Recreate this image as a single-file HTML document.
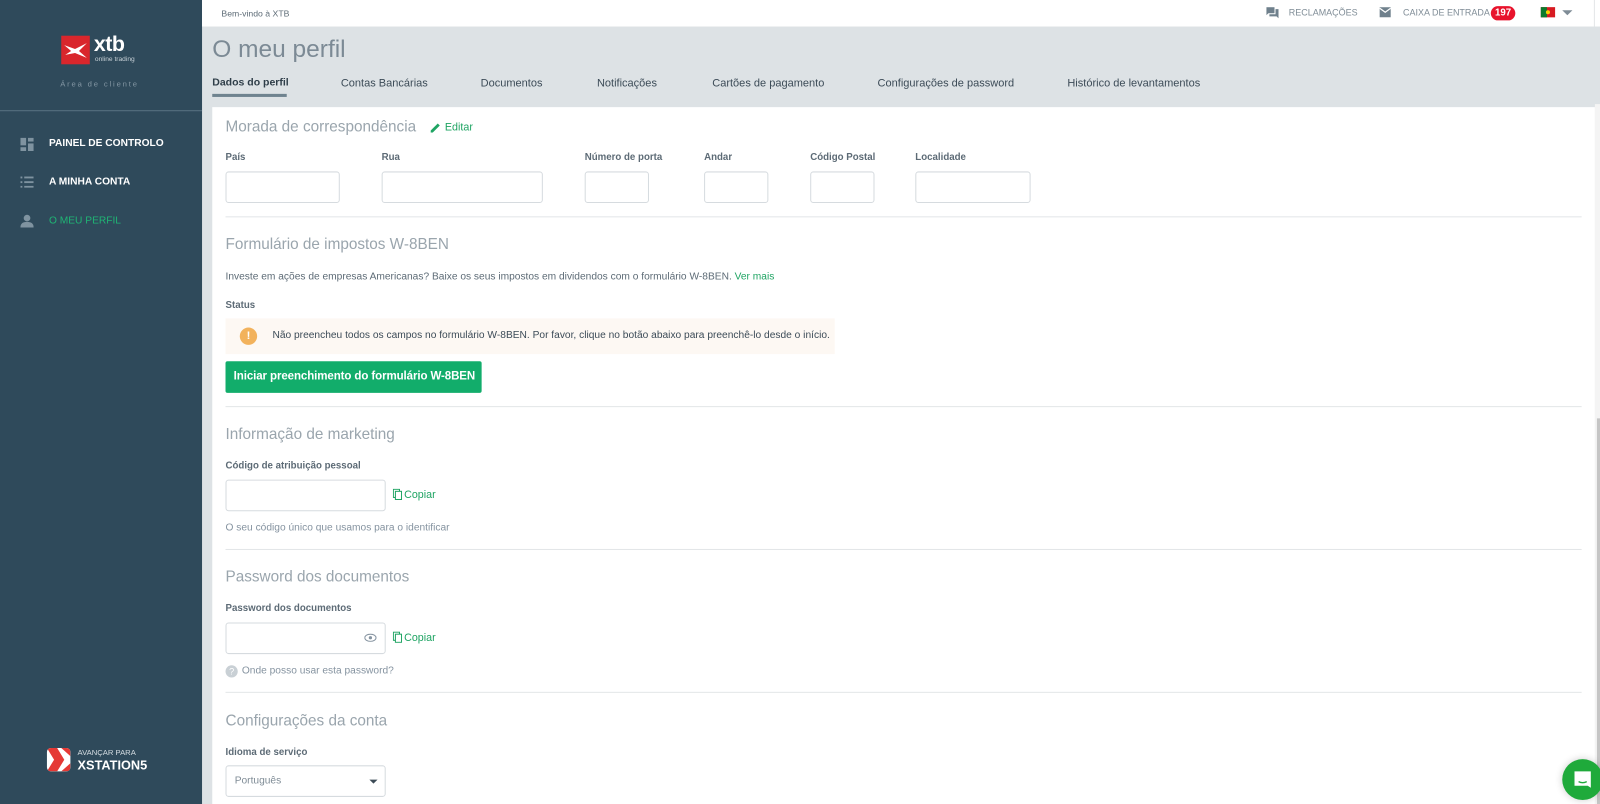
<!DOCTYPE html>
<html><head><meta charset="utf-8"><style>
*{margin:0;padding:0;box-sizing:border-box}
body{width:1600px;height:804px;overflow:hidden;background:#dde2e5;font-family:"Liberation Sans",Arial,sans-serif;color:#3c4b57}
#w{position:absolute;left:0;top:0;width:1568px;height:788px;transform:scale(1.020408);transform-origin:0 0}
.a{position:absolute;white-space:nowrap}
#side{position:absolute;left:0;top:0;width:198px;height:788px;background:#2f4a5b}
#top{position:absolute;left:198px;top:0;width:1370px;height:26px;background:#fff}
#card{position:absolute;left:208px;top:105px;width:1355px;height:683px;background:#fff}
.nav{font-size:10px;font-weight:bold;color:#fff}
.h{font-size:15px;color:#9aa5ad}
.l{font-size:9.5px;font-weight:bold;color:#5d6b76}
.in{position:absolute;border:1px solid #d6dbdf;border-radius:3px;background:#fff;height:31px}
.hr{position:absolute;left:221px;width:1329px;height:1px;background:#e3e6e8}
.t{font-size:10px;color:#5d6b76}
.g{color:#1fa463}
.tab{font-size:10.8px;color:#3c4b57;top:76px}
</style></head><body><div id="w">
<div id="side"></div>
<div class="a" style="left:60px;top:35px;width:28px;height:28px;background:#d9262c"></div>
<svg class="a" style="left:62px;top:41px" width="25" height="17" viewBox="0 0 26 17"><path d="M1 3 L12 7 L24 1 L16 9 L24 16 L12 11 L2 13 L8 9 Z" fill="#fff"/></svg>
<div class="a" style="left:92px;top:32px;font-size:21px;font-weight:bold;color:#fff;letter-spacing:-0.5px">xtb</div>
<div class="a" style="left:93px;top:55px;font-size:6.5px;color:#c7d0d6">online trading</div>
<div class="a" style="left:59px;top:78px;font-size:7.5px;color:#8497a4;letter-spacing:1.8px">Área de cliente</div>
<div class="a" style="left:0;top:108px;width:198px;height:1px;background:#587283"></div>
<svg class="a" style="left:20px;top:135px" width="13" height="13" viewBox="0 0 14 14"><rect x="0" y="0" width="6" height="8" fill="#7f93a0"/><rect x="8" y="0" width="6" height="4" fill="#7f93a0"/><rect x="8" y="6" width="6" height="8" fill="#7f93a0"/><rect x="0" y="10" width="6" height="4" fill="#7f93a0"/></svg>
<div class="a nav" style="left:48px;top:135px">PAINEL DE CONTROLO</div>
<svg class="a" style="left:20px;top:173px" width="13" height="11" viewBox="0 0 14 12"><g fill="#7f93a0"><rect x="0" y="0" width="2" height="2"/><rect x="4" y="0" width="10" height="2"/><rect x="0" y="5" width="2" height="2"/><rect x="4" y="5" width="10" height="2"/><rect x="0" y="10" width="2" height="2"/><rect x="4" y="10" width="10" height="2"/></g></svg>
<div class="a nav" style="left:48px;top:173px">A MINHA CONTA</div>
<svg class="a" style="left:20px;top:210px" width="13" height="13" viewBox="0 0 14 14"><circle cx="7" cy="4" r="3.5" fill="#7f93a0"/><path d="M0 14 Q0 8 7 8 Q14 8 14 14Z" fill="#7f93a0"/></svg>
<div class="a nav" style="left:48px;top:211px;color:#1fb574;font-weight:normal">O MEU PERFIL</div>
<div class="a" style="left:46px;top:733px;width:23px;height:23px;background:#fff;border-radius:4px;overflow:hidden"><svg width="23" height="23"><path d="M0 0 L10 0 L17 11.5 L10 23 L0 23 L7 11.5Z" fill="#e53935"/><path d="M14 0 L23 0 L23 8Z M23 15 L23 23 L14 23Z" fill="#e53935"/></svg></div>
<div class="a" style="left:76px;top:733px;font-size:7.5px;color:#d5dde2">AVANÇAR PARA</div>
<div class="a" style="left:76px;top:743px;font-size:12.5px;font-weight:bold;color:#fff">XSTATION5</div>

<div id="top"></div>
<div class="a" style="left:217px;top:8px;font-size:8.5px;color:#5d6b76">Bem-vindo à XTB</div>
<svg class="a" style="left:1241px;top:7px" width="12" height="11"><path d="M0 0h8v6H2l-2 2z" fill="#6f808c"/><path d="M9 2h3v9l-2-2H3V7h6z" fill="#6f808c"/></svg>
<div class="a" style="left:1263px;top:7px;font-size:8.8px;color:#7f8c96">RECLAMAÇÕES</div>
<svg class="a" style="left:1352px;top:7px" width="11" height="10"><rect width="11" height="10" fill="#6f808c"/><path d="M0 1 L5.5 5 L11 1" stroke="#fff" stroke-width="1.2" fill="none"/></svg>
<div class="a" style="left:1375px;top:7px;font-size:8.8px;color:#7f8c96">CAIXA DE ENTRADA</div>
<div class="a" style="left:1461px;top:6px;width:24px;height:14px;border-radius:7px;background:#e8132c;color:#fff;font-size:9.5px;font-weight:bold;text-align:center;line-height:14px">197</div>
<div class="a" style="left:1510px;top:7px;width:14px;height:10px;background:#d71a21"><div style="width:6px;height:10px;background:#0b7a2c"></div></div>
<div class="a" style="left:1515px;top:10px;width:4px;height:4px;border-radius:50%;background:#f5d300"></div>
<div class="a" style="left:1531px;top:10px;width:0;height:0;border-left:5px solid transparent;border-right:5px solid transparent;border-top:5px solid #7f8c96"></div>
<div class="a" style="left:1562px;top:0;width:1px;height:26px;background:#e3e6e8"></div>

<div class="a" style="left:208px;top:35px;font-size:24px;color:#7c8a95">O meu perfil</div>
<div class="a" style="left:208px;top:76px;font-size:10.3px;font-weight:bold;color:#2f3e49">Dados do perfil</div>
<div class="a" style="left:208px;top:92px;width:73px;height:3px;background:#6f838f"></div>
<div class="a tab" style="left:334px">Contas Bancárias</div>
<div class="a tab" style="left:471px">Documentos</div>
<div class="a tab" style="left:585px">Notificações</div>
<div class="a tab" style="left:698px">Cartões de pagamento</div>
<div class="a tab" style="left:860px">Configurações de password</div>
<div class="a tab" style="left:1046px">Histórico de levantamentos</div>

<div id="card"></div>
<div class="a" style="left:1563px;top:102px;width:5px;height:686px;background:#f4f4f4"></div>
<div class="a" style="left:1565px;top:410px;width:3px;height:378px;background:#c5c5c5"></div>

<div class="a h" style="left:221px;top:116px">Morada de correspondência</div>
<svg class="a" style="left:422px;top:120px" width="10" height="10"><path d="M0 10 L0 8 L7 1 L9 3 L2 10Z" fill="#1fa463"/></svg>
<div class="a g" style="left:436px;top:119px;font-size:10.5px">Editar</div>
<div class="a l" style="left:221px;top:149px">País</div>
<div class="a l" style="left:374px;top:149px">Rua</div>
<div class="a l" style="left:573px;top:149px">Número de porta</div>
<div class="a l" style="left:690px;top:149px">Andar</div>
<div class="a l" style="left:794px;top:149px">Código Postal</div>
<div class="a l" style="left:897px;top:149px">Localidade</div>
<div class="in" style="left:221px;top:168px;width:112px"></div>
<div class="in" style="left:374px;top:168px;width:158px"></div>
<div class="in" style="left:573px;top:168px;width:63px"></div>
<div class="in" style="left:690px;top:168px;width:63px"></div>
<div class="in" style="left:794px;top:168px;width:63px"></div>
<div class="in" style="left:897px;top:168px;width:113px"></div>
<div class="hr" style="top:212px"></div>

<div class="a h" style="left:221px;top:231px">Formulário de impostos W-8BEN</div>
<div class="a t" style="left:221px;top:266px">Investe em ações de empresas Americanas? Baixe os seus impostos em dividendos com o formulário W-8BEN. <span class="g">Ver mais</span></div>
<div class="a l" style="left:221px;top:294px">Status</div>
<div class="a" style="left:221px;top:312px;width:597px;height:35px;background:#fdf8f3"></div>
<div class="a" style="left:235px;top:321px;width:17px;height:17px;border-radius:50%;background:#f2b25c;color:#fff;font-size:11px;font-weight:bold;text-align:center;line-height:17px">!</div>
<div class="a t" style="left:267px;top:323px;color:#3c4b57">Não preencheu todos os campos no formulário W-8BEN. Por favor, clique no botão abaixo para preenchê-lo desde o início.</div>
<div class="a" style="left:221px;top:354px;width:251px;height:31px;background:#12ad6b;border-radius:2px;color:#fff;font-size:11.3px;letter-spacing:-0.1px;font-weight:bold;line-height:31px;padding-left:8px">Iniciar preenchimento do formulário W-8BEN</div>
<div class="hr" style="top:398px"></div>

<div class="a h" style="left:221px;top:417px">Informação de marketing</div>
<div class="a l" style="left:221px;top:451px">Código de atribuição pessoal</div>
<div class="in" style="left:221px;top:470px;width:157px"></div>
<svg class="a" style="left:385px;top:479px" width="9" height="11"><rect x="0.5" y="0.5" width="6" height="8" fill="none" stroke="#1fa463"/><rect x="2.5" y="2.5" width="6" height="8" fill="#fff" stroke="#1fa463"/></svg>
<div class="a g" style="left:396px;top:479px;font-size:10.5px">Copiar</div>
<div class="a t" style="left:221px;top:512px;color:#8593a0">O seu código único que usamos para o identificar</div>
<div class="hr" style="top:538px"></div>

<div class="a h" style="left:221px;top:557px">Password dos documentos</div>
<div class="a l" style="left:221px;top:591px">Password dos documentos</div>
<div class="in" style="left:221px;top:610px;width:157px"></div>
<svg class="a" style="left:357px;top:621px" width="12" height="8"><ellipse cx="6" cy="4" rx="5.5" ry="3.5" fill="none" stroke="#8593a0"/><circle cx="6" cy="4" r="1.6" fill="#8593a0"/></svg>
<svg class="a" style="left:385px;top:619px" width="9" height="11"><rect x="0.5" y="0.5" width="6" height="8" fill="none" stroke="#1fa463"/><rect x="2.5" y="2.5" width="6" height="8" fill="#fff" stroke="#1fa463"/></svg>
<div class="a g" style="left:396px;top:619px;font-size:10.5px">Copiar</div>
<div class="a" style="left:221px;top:652px;width:12px;height:12px;border-radius:50%;background:#c9d0d5;color:#fff;font-size:9px;text-align:center;line-height:12px">?</div>
<div class="a t" style="left:237px;top:652px;color:#8593a0">Onde posso usar esta password?</div>
<div class="hr" style="top:678px"></div>

<div class="a h" style="left:221px;top:698px">Configurações da conta</div>
<div class="a l" style="left:221px;top:732px">Idioma de serviço</div>
<div class="in" style="left:221px;top:750px;width:157px"></div>
<div class="a t" style="left:230px;top:760px;color:#7f8c96">Português</div>
<div class="a" style="left:362px;top:764px;border-left:4px solid transparent;border-right:4px solid transparent;border-top:4px solid #3c4b57"></div>

<div class="a" style="left:1531px;top:744px;width:40px;height:40px;border-radius:50%;background:#1faa3b;box-shadow:0 0 8px rgba(0,0,0,.2)"></div>
<svg class="a" style="left:1541px;top:754px" width="20" height="20"><path d="M2 2h16v16l-3-2H2z" fill="#fff"/><path d="M6 12 Q10 14 14 12" stroke="#1faa3b" stroke-width="1.3" fill="none"/></svg>
</div></body></html>
